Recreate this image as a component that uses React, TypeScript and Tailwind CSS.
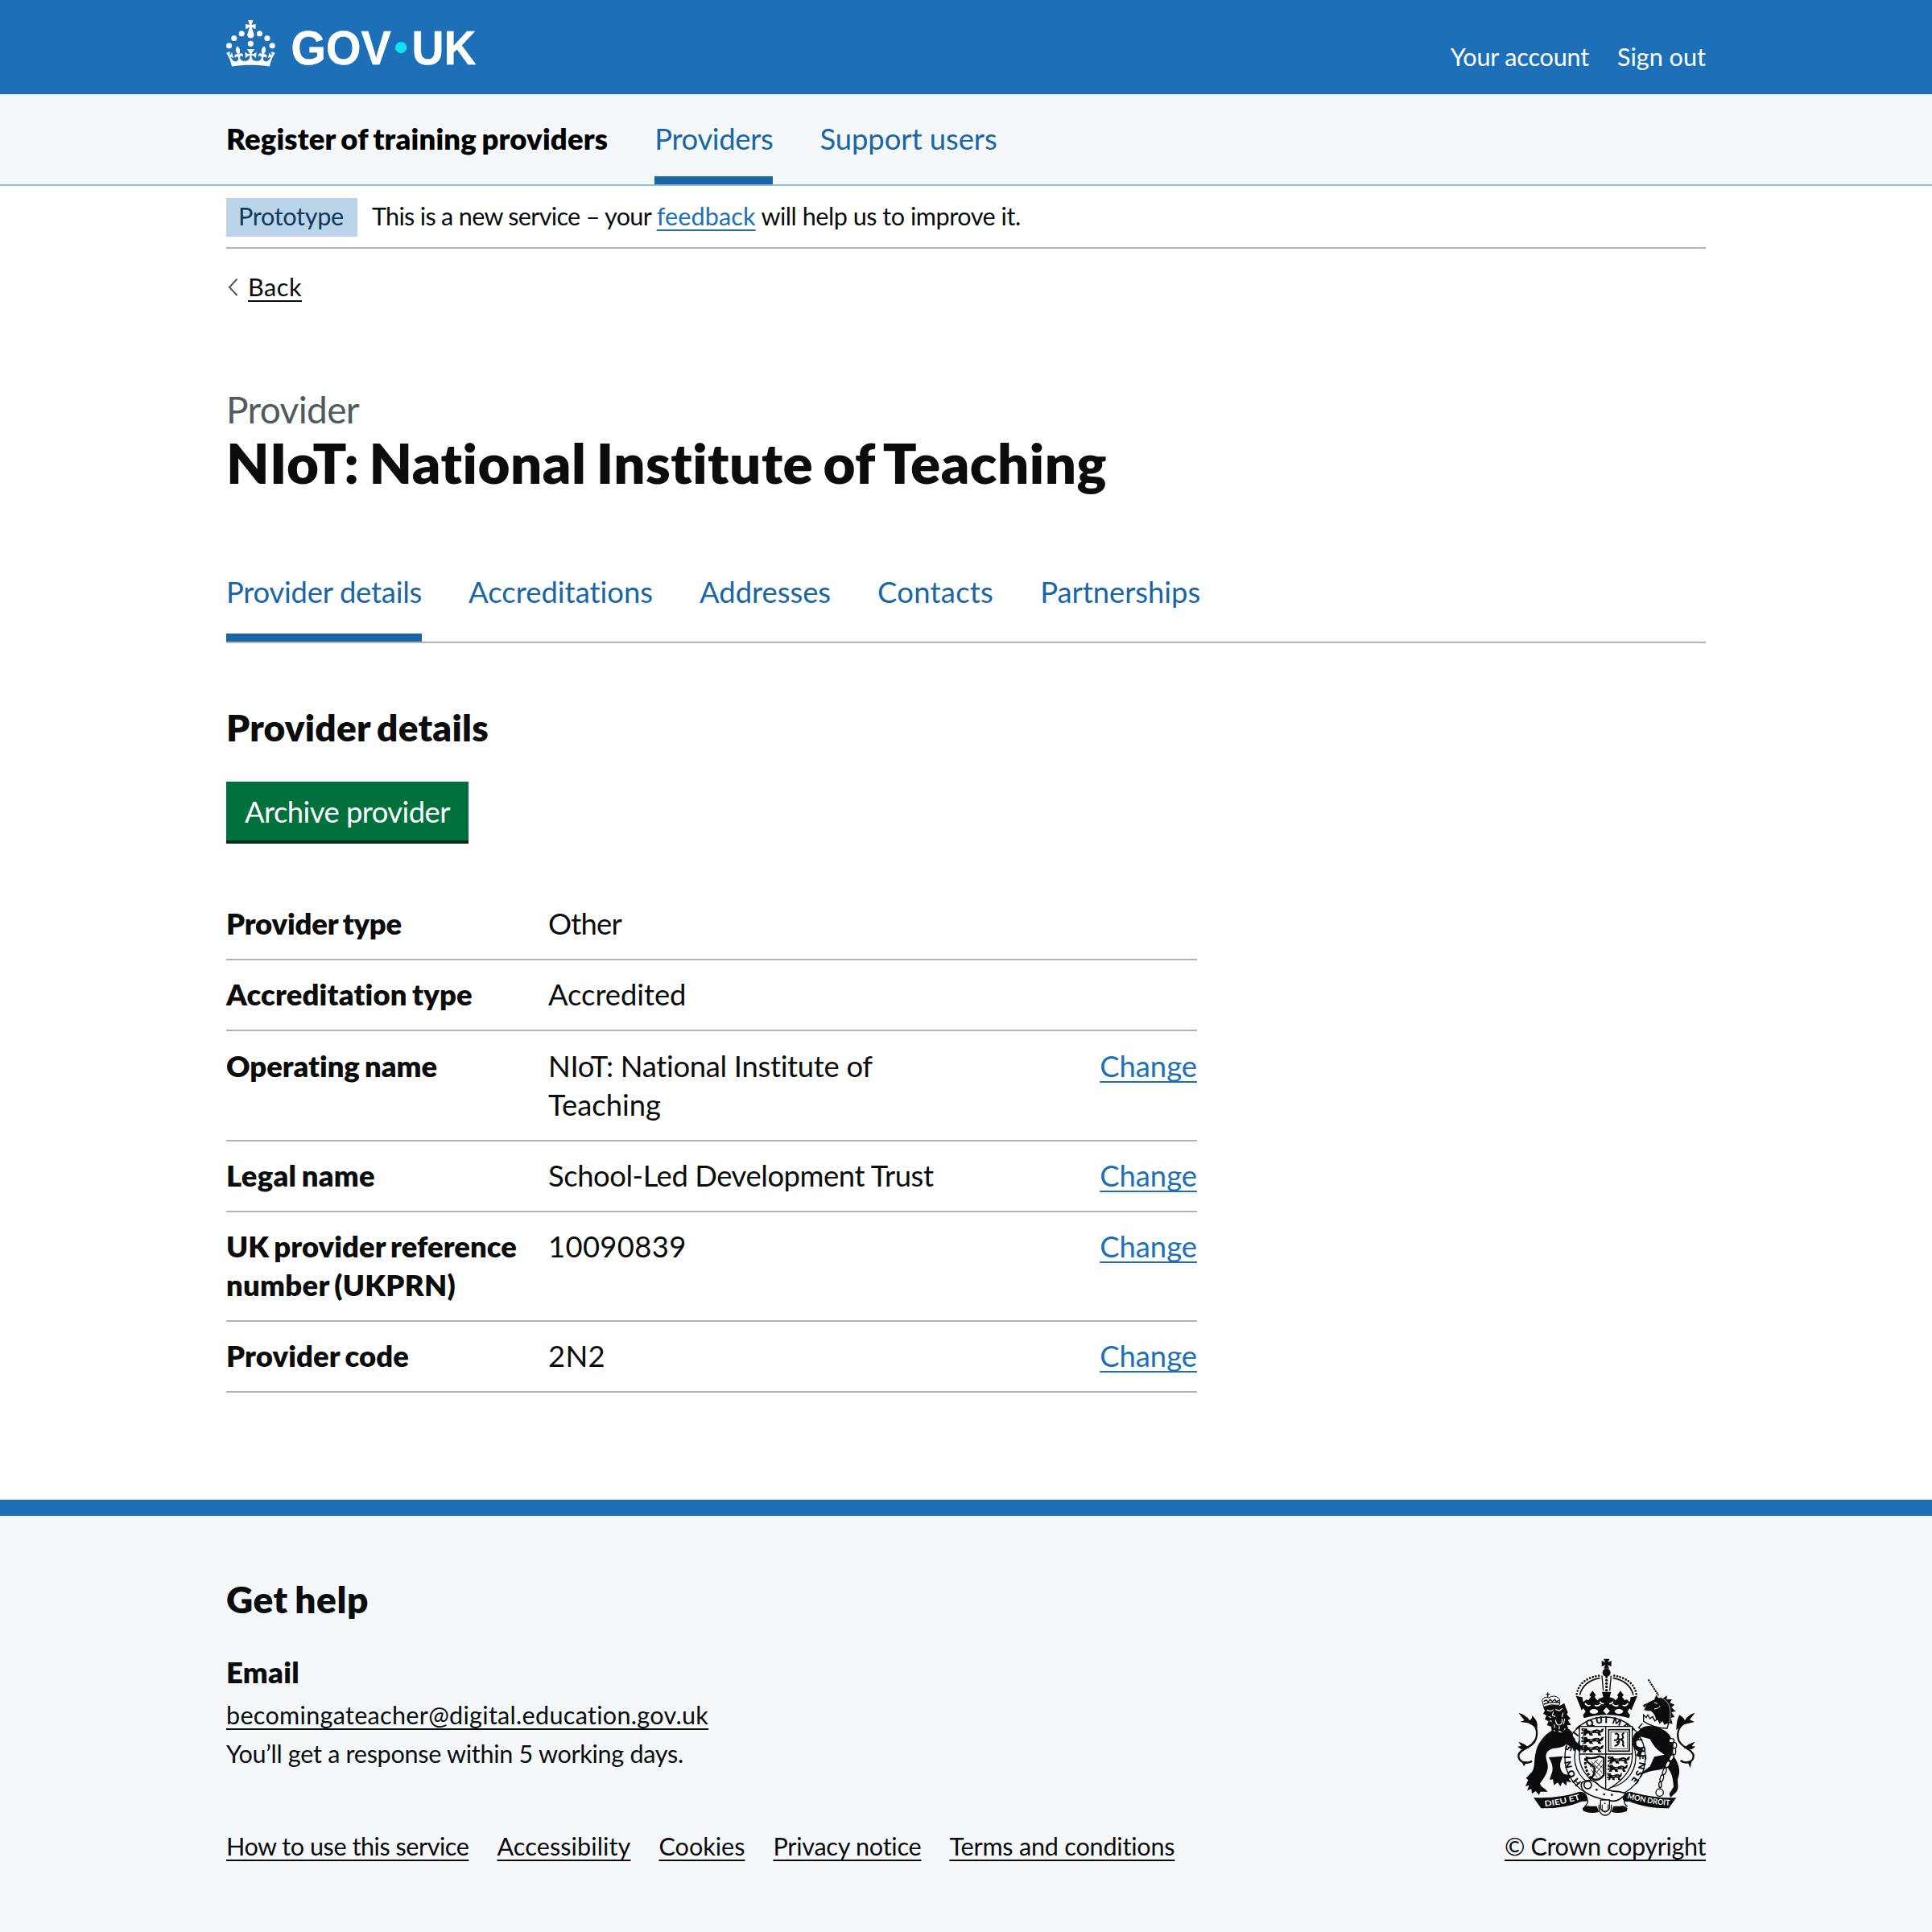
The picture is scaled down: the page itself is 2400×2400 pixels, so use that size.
const LINK = "underline decoration-[2px] underline-offset-[5px] [text-decoration-skip-ink:none]";
const BOLD = "font-extrabold [word-spacing:-0.06em]";

function Logo() {
  return (
    <svg viewBox="0 0 324 60" className="block h-[57.4px] w-[310px] overflow-visible" fill="#fff" role="img" aria-label="GOV.UK">
      <circle cx="20" cy="17.6" r="3.7" />
      <circle cx="10.2" cy="23.5" r="3.7" />
      <circle cx="3.7" cy="33.2" r="3.7" />
      <circle cx="31.7" cy="30.6" r="3.7" />
      <circle cx="43.3" cy="17.6" r="3.7" />
      <circle cx="53.2" cy="23.5" r="3.7" />
      <circle cx="59.7" cy="33.2" r="3.7" />
      <path d="M33.1,9.8c.2-.1.3-.3.5-.5l4.6,2.4v-6.8l-4.6,1.5c-.1-.2-.3-.3-.5-.5l1.9-5.9h-6.7l1.9,5.9c-.2.1-.3.3-.5.5l-4.6-1.5v6.8l4.6-2.4c.1.2.3.3.5.5l-2.6,8c-.9,2.8,1.2,5.7,4.1,5.7h0c3,0,5.1-2.9,4.1-5.7l-2.6-8ZM37,37.9s-3.4,3.8-4.1,6.1c2.2,0,4.2-.5,6.4-2.8l-.7,8.5c-2-2.8-4.4-4.1-5.7-3.8.1,3.1.5,6.7,5.8,7.2,3.7.3,6.7-1.5,7-3.8.4-2.6-2-4.3-3.7-1.6-1.4-4.5,2.4-6.1,4.9-3.2-1.9-4.5-1.8-7.7,2.4-10.9,3,4,2.6,7.3-1.2,11.1,2.4-1.3,6.2,0,4,4.6-1.2-2.8-3.7-2.2-4.2.2-.3,1.7.7,3.7,3,4.2,1.9.3,4.7-.9,7-5.9-1.3,0-2.4.7-3.9,1.7l2.4-8c.6,2.3,1.4,3.7,2.2,4.5.6-1.6.5-2.8,0-5.3l5,1.8c-2.6,3.6-5.2,8.7-7.3,17.5-7.4-1.1-15.7-1.7-24.5-1.7h0c-8.8,0-17.1.6-24.5,1.7-2.1-8.9-4.7-13.9-7.3-17.5l5-1.8c-.5,2.5-.6,3.7,0,5.3.8-.8,1.6-2.3,2.2-4.5l2.4,8c-1.5-1-2.6-1.7-3.9-1.7,2.3,5,5.2,6.2,7,5.9,2.3-.4,3.3-2.4,3-4.2-.5-2.4-3-3.1-4.2-.2-2.2-4.6,1.6-6,4-4.6-3.7-3.7-4.2-7.1-1.2-11.1,4.2,3.2,4.3,6.4,2.4,10.9,2.5-2.8,6.3-1.3,4.9,3.2-1.8-2.7-4.1-1-3.7,1.6.3,2.3,3.3,4.1,7,3.8,5.4-.5,5.7-4.2,5.8-7.2-1.3-.2-3.7,1-5.7,3.8l-.7-8.5c2.2,2.3,4.2,2.7,6.4,2.8-.7-2.3-4.1-6.1-4.1-6.1h10.6,0Z" />
      <circle cx="227" cy="35.6" r="7.5" fill="#11e0f1" />
      <g fontFamily="Liberation Sans" fontWeight="700" fontSize="61">
        <text x="84.2" y="57.4" textLength="130" lengthAdjust="spacingAndGlyphs" stroke="#fff" strokeWidth="0.5">GOV</text>
        <text x="241" y="57.4" textLength="83.5" lengthAdjust="spacingAndGlyphs" stroke="#fff" strokeWidth="0.5">UK</text>
      </g>
    </svg>
  );
}

const INK = "#0b0c0c";
const PAPER = "#f4f8fb";

function PassantLion({ x, y, w }: { x: number; y: number; w: number }) {
  return (
    <g transform={`translate(${x} ${y}) scale(${w / 80} 1)`}>
      <path d="M0 2 Q4 -4 10 0 L20 0 22 6 Q34 10 46 5 Q58 0 68 8 Q72 -2 80 0 L78 6 Q78 14 66 16 L72 26 H60 L58 18 Q48 15 38 18 L42 26 H30 L26 18 18 20 16 26 H4 L10 18 0 20 V14 L12 12 2 8z" fill={INK} />
      <path d="M6 4 h4 M30 12 h10 M52 11 h8" stroke={PAPER} strokeWidth="2.5" />
    </g>
  );
}

function RoyalArms() {
  return (
    <svg viewBox="0 0 720 615" className="block h-[205px] w-[240px] translate-x-px" fill={INK}>
      <defs>
        <path id="garter" d="M274 482 A128 128 0 1 1 432 488" />
        <path id="mottoL" d="M132 567 Q205 560 272 538" />
        <path id="mottoR" d="M438 536 Q510 558 602 564" />
      </defs>

      {/* garter */}
      <circle cx="357" cy="384" r="150" fill={PAPER} stroke={INK} strokeWidth="4" />
      <circle cx="357" cy="384" r="114" fill={PAPER} stroke={INK} strokeWidth="4" />
      <text fontFamily="Lato" fontWeight="800" fontSize="35" wordSpacing="-4">
        <textPath href="#garter" startOffset="6" textLength="600">HONI SOIT QUI MAL Y PENSE</textPath>
      </text>

      {/* imperial crown */}
      <path d="M351 17 h22 l-6 13 13 -6 v22 l-13 -6 5 13 h-20 l5 -13 -13 6 v-22 l13 6z" />
      <circle cx="362" cy="68" r="15" />
      <path d="M262 152 Q275 100 338 88 M462 152 Q449 100 386 88" fill="none" stroke={INK} strokeWidth="5" />
      <path d="M251 148 Q262 88 345 78 M473 148 Q462 88 379 78" fill="none" stroke={INK} strokeWidth="8" strokeLinecap="round" strokeDasharray="0 11.5" />
      <path d="M345 80 L350 136 M379 80 L374 136" fill="none" stroke={INK} strokeWidth="4" />
      <path d="M362 84 V136" fill="none" stroke={INK} strokeWidth="10" strokeLinecap="round" strokeDasharray="0 12.5" />
      <path d="M248 155 L272 160 275 178 288 168 294 172 304 158 298 152 310 136 322 152 318 160 328 172 336 164 350 160 345 140 379 140 374 160 388 164 396 172 406 160 402 152 414 136 426 152 420 158 430 172 436 168 449 178 452 160 477 155 458 200 446 238 Q362 214 278 238 L266 200z" />
      <path d="M282 182 q6 14 20 8 M442 182 q-6 14 -20 8 M340 186 q-12 10 -22 4 M384 186 q12 10 22 4 M338 176 q4 10 14 8 M386 176 q-4 10 -14 8" stroke={PAPER} strokeWidth="5" fill="none" />
      <g fill={PAPER}>
        <ellipse cx="315" cy="213" rx="16" ry="9" />
        <path d="M362 198 l13 13 -13 13 -13 -13z" />
        <ellipse cx="408" cy="213" rx="16" ry="9" />
        <path d="M264 212 l12 -10 8 12 -9 12zM460 212 l-12 -10 -8 12 9 12z" />
      </g>

      {/* shield */}
      <path d="M261 269 H458 V385 Q455 455 360 508 Q265 455 261 385z" fill={PAPER} stroke={INK} strokeWidth="4" />
      <path d="M359 269 V505 M261 372 H458" stroke={INK} strokeWidth="4" />
      <PassantLion x={268} y={277} w={84} />
      <PassantLion x={268} y={308} w={84} />
      <PassantLion x={268} y={339} w={84} />
      <rect x="370" y="281" width="77" height="80" fill="none" stroke={INK} strokeWidth="5" />
      <rect x="378" y="289" width="61" height="64" fill="none" stroke={INK} strokeWidth="2" />
      <path d="M394 298 q8 -6 12 2 q2 8 -2 14 q8 6 14 2 q10 -4 4 -12 q-4 -8 6 -10 M404 316 q-6 6 -14 4 M408 320 q2 12 -6 18 q-6 4 -10 2 M416 318 q10 4 8 14 q-4 6 4 12 M412 326 l-14 2" fill="none" stroke={INK} strokeWidth="6" />
      <path d="M288 385 Q310 392 336 380 L352 386 V450 Q330 478 306 462 Q322 440 316 420 Q300 408 290 400z" fill="none" stroke={INK} strokeWidth="7" />
      <path d="M284 388 Q278 430 306 464" fill="none" stroke={INK} strokeWidth="9" strokeDasharray="9 5" />
      <path d="M305 400 L345 440 M298 410 L340 455 M318 396 L348 424 M305 430 L328 460 M345 396 L310 440 M348 412 L312 456 M330 392 L300 420" stroke={INK} strokeWidth="2.5" />
      <PassantLion x={366} y={381} w={84} />
      <PassantLion x={366} y={412} w={76} />
      <PassantLion x={364} y={443} w={56} />

      {/* buckle and strap */}
      <path d="M270 478 Q300 460 325 480 Q350 510 408 512 L436 518 Q405 555 372 545 Q310 535 280 512 Q262 495 270 478z" fill={PAPER} stroke={INK} strokeWidth="5" />
      <circle cx="292" cy="487" r="14" fill="none" stroke={INK} strokeWidth="5" />
      <circle cx="325" cy="505" r="4" />
      <circle cx="353" cy="522" r="4" />
      <circle cx="382" cy="524" r="4" />
      <path d="M340 543 H373 V575 Q356 600 340 575z" fill={PAPER} stroke={INK} strokeWidth="4" />
      <path d="M272 574 Q284 562 300 566 L326 566 334 588 Q300 596 276 584zM440 574 Q430 562 412 566 L388 566 380 588 Q414 596 438 584z" />
      <path d="M290 540 Q296 556 280 568 M430 540 Q424 556 440 568" fill="none" stroke={INK} strokeWidth="4" />
      <path d="M334 560 Q332 600 357 600 Q382 600 380 560" fill="none" stroke={INK} strokeWidth="4" />
      <path d="M346 560 V580 Q357 590 368 580 V560" fill="none" stroke={INK} strokeWidth="3" />
      <circle cx="356" cy="556" r="3" />

      {/* motto ribbon */}
      <path d="M90 534 Q190 538 262 512 Q285 512 290 530 Q300 552 270 548 Q210 575 118 574z" />
      <path d="M622 534 Q540 538 452 512 Q428 512 424 532 Q418 552 446 548 Q510 575 594 574z" />
      <g fill={PAPER} fontFamily="Lato" fontWeight="700" fontSize="29">
        <text><textPath href="#mottoL" textLength="136" lengthAdjust="spacingAndGlyphs">DIEU ET</textPath></text>
        <text><textPath href="#mottoR" textLength="163" lengthAdjust="spacingAndGlyphs">MON DROIT</textPath></text>
      </g>

      {/* lion supporter */}
      <path d="M128 196 L122 172 Q130 154 146 162 Q168 150 182 162 Q192 168 186 190 Q155 184 128 196z" fill={PAPER} stroke={INK} strokeWidth="3" />
      <path d="M143 142 V162 M136 149 H151 M128 176 l10 -6 6 8 8 -10 8 8 10 -8 4 8 12 -4 M128 186 Q155 176 186 180" fill="none" stroke={INK} strokeWidth="4" />
      <path d="M126 198 Q155 184 188 192 L205 182 210 198 218 216 214 224 228 240 218 246 230 264 216 264 220 284 206 276 198 292 186 284 176 294 168 282 158 288 156 270 140 264 146 250 132 242 138 228 126 222 132 210z" />
      <path d="M140 208 l14 4 10 -6 M172 206 l14 4 12 -8 M164 214 l-4 14 12 4 M172 244 q2 20 14 20 q14 -4 10 -24 M146 232 l10 4 M150 248 l8 2 M200 218 l-4 16 M206 240 l-4 20 M186 268 l0 12 M166 262 l4 12" fill="none" stroke={PAPER} strokeWidth="3.5" />
      <path d="M158 284 C128 302 102 335 98 368 C90 395 98 430 78 444 L62 462 70 468 60 492 74 488 66 508 82 502 84 520 98 510 110 524 116 512 142 512 C136 500 118 496 114 482 C128 462 146 440 143 412 C140 392 126 372 150 356 C172 346 200 352 212 334 L236 350 240 362 250 354 264 366 266 354 278 356 268 340 C250 332 240 318 232 288 L214 272 L196 292z" />
      <path d="M146 384 L200 380 C186 404 184 428 204 446 L232 452 222 466 232 478 214 474 212 490 198 476 190 492 180 478 166 488 162 466 150 468 156 448 C166 430 160 404 146 384z" />
      <path d="M84 398 C60 412 34 400 34 378 C36 350 90 350 100 312 C108 280 96 254 60 248" fill="none" stroke={INK} strokeWidth="7" />
      <path d="M34 218 Q62 226 76 246 Q86 240 84 228 Q108 246 104 276 L70 256 40 252 56 246zM34 326 Q60 334 74 350 L44 354 30 344 44 342zM92 320 Q82 330 76 346 L96 330zM46 400 L54 418 66 400z" />

      {/* unicorn supporter */}
      <path d="M518 94 L556 154" stroke={INK} strokeWidth="6" strokeDasharray="7 2.5" />
      <path d="M572 164 l16 -10 -2 14 20 0 -8 12 18 8 -12 10 16 14 -16 4 12 18 -14 2 6 24 -16 -6z" />
      <path d="M496 192 Q500 184 512 182 Q530 172 540 168 L546 150 L556 162 Q566 158 574 166 Q598 182 600 212 Q602 242 594 264 Q570 262 546 242 Q540 220 528 212 Q512 214 500 207 L506 200z" stroke={PAPER} strokeWidth="2" />
      <path d="M540 180 l12 4 M506 192 l4 2 M540 204 Q556 204 562 192" fill="none" stroke={PAPER} strokeWidth="3" />
      <path d="M500 226 L510 236 516 226 524 240 534 232 542 248 554 240 560 256 572 246 578 260 594 254 L588 276 Q540 276 500 250z" fill={PAPER} stroke={INK} strokeWidth="4" />
      <path d="M482 286 Q500 262 530 268 Q580 276 596 300 Q616 330 606 368 C620 392 642 420 630 456 C622 480 636 492 622 514 L600 534 596 520 612 494 C610 462 606 444 588 420 C560 436 536 430 512 440 L488 450 500 436 L524 418 540 382 L578 374 C548 356 536 340 524 316 L486 306 Q466 322 476 342 L498 352 488 384 472 378 480 362 Q456 352 460 312 Q466 290 482 286z" />
      <path d="M496 258 l-14 14 10 10 M486 294 Q512 288 522 300" fill="none" stroke={INK} strokeWidth="4" />
      <path d="M638 396 C660 412 688 400 686 376 C680 350 640 350 630 318 C622 286 636 262 664 250" fill="none" stroke={INK} strokeWidth="7" />
      <path d="M692 218 Q664 226 654 246 L648 236 634 226 Q622 246 622 282 L650 262 690 252 672 244zM692 326 Q664 334 650 350 L680 354 694 344 680 342zM664 400 L674 424 680 396z" />
      <g fill={PAPER} stroke={INK} strokeWidth="4">
        <ellipse cx="604" cy="322" rx="10" ry="8" />
        <ellipse cx="616" cy="340" rx="7" ry="11" />
        <ellipse cx="614" cy="362" rx="6" ry="12" />
        <ellipse cx="604" cy="386" rx="7" ry="12" transform="rotate(25 604 386)" />
        <ellipse cx="590" cy="410" rx="7" ry="13" transform="rotate(25 590 410)" />
        <ellipse cx="578" cy="436" rx="6" ry="13" transform="rotate(20 578 436)" />
        <ellipse cx="568" cy="462" rx="6" ry="13" transform="rotate(15 568 462)" />
        <ellipse cx="562" cy="486" rx="5" ry="11" />
        <circle cx="560" cy="515" r="14" />
      </g>
    </svg>
  );
}

type Line = [text: string, tracking: string];

const ROWS: { key: Line[]; value: Line[]; change: boolean }[] = [
  { key: [["Provider type", "tracking-[-0.17px]"]], value: [["Other", "tracking-[-0.8px]"]], change: false },
  { key: [["Accreditation type", "tracking-[0.18px]"]], value: [["Accredited", "tracking-[-0.05px]"]], change: false },
  { key: [["Operating name", "tracking-[-0.03px]"]], value: [["NIoT: National Institute of", "tracking-[-0.3px]"], ["Teaching", "tracking-normal"]], change: true },
  { key: [["Legal name", "tracking-[0.27px]"]], value: [["School-Led Development Trust", "tracking-[-0.43px]"]], change: true },
  { key: [["UK provider reference", "tracking-[0.06px]"], ["number (UKPRN)", "tracking-[0.28px]"]], value: [["10090839", "tracking-[0.35px]"]], change: true },
  { key: [["Provider code", "tracking-[0.14px]"]], value: [["2N2", "tracking-[0.33px]"]], change: true },
];

const TABS: Line[] = [
  ["Provider details", "tracking-[-0.23px]"],
  ["Accreditations", "tracking-[0.02px]"],
  ["Addresses", "tracking-[-0.02px]"],
  ["Contacts", "tracking-[0.26px]"],
  ["Partnerships", "tracking-[-0.02px]"],
];

const FOOTER_LINKS: Line[] = [
  ["How to use this service", "tracking-[-0.47px]"],
  ["Accessibility", "tracking-[0.1px]"],
  ["Cookies", "tracking-[-0.02px]"],
  ["Privacy notice", "tracking-[-0.26px]"],
  ["Terms and conditions", "tracking-[-0.22px]"],
];

export default function App() {
  return (
    <div className="flex h-[2400px] w-[2400px] flex-col bg-white font-['Lato',sans-serif] text-[#0b0c0c] [font-variant-ligatures:none]">
      <header className="flex h-[117px] justify-between bg-[#1d70b8] px-[281px]">
        <div className="pt-[25px]">
          <Logo />
        </div>
        <nav className="flex gap-[35px] pt-[52px] text-[30.6px] leading-[38px] text-white">
          <a className="tracking-[-0.2px]">Your account</a>
          <a>Sign out</a>
        </nav>
      </header>

      <div className="flex h-[114px] gap-[58px] border-b-2 border-[#8eb8dc] bg-[#f4f8fb] px-[281px] text-[36.4px] leading-[48px]">
        <div className={`pt-[31px] tracking-[0.21px] text-black ${BOLD}`}>Register of training providers</div>
        <a className="border-b-[10px] border-[#1a65a6] pt-[31px] tracking-[-0.33px] text-[#1a65a6]">Providers</a>
        <a className="pt-[31px] tracking-[-0.05px] text-[#1a65a6]">Support users</a>
      </div>

      <main className="flex h-[1632px] flex-col px-[281px]">
        <div className="flex h-[78px] items-start gap-[18px] border-b-2 border-[#b1b4b6] pt-[15px] text-[30.6px] leading-[46px]">
          <strong className="h-[48px] w-[163px] bg-[#bbd4ea] pl-[15px] font-normal tracking-[-0.3px] text-[#0f385c]">Prototype</strong>
          <p className="whitespace-pre">
            <span className="tracking-[-0.7px]">This is a new service – your </span>
            <a className={`tracking-[0.11px] text-[#1d70b8] ${LINK}`}>feedback</a>
            <span className="tracking-[-0.48px]"> will help us to improve it.</span>
          </p>
        </div>

        <div className="flex h-[48px] pt-[29px] text-[30.6px] leading-[38px]">
          <svg viewBox="0 0 27 38" className="h-[38px] w-[27px]" fill="none" stroke="#505a5f" strokeWidth="2">
            <path d="M13.5 8.5 L4 18.7 L13.5 29" />
          </svg>
          <a className={`h-[38px] tracking-[0.53px] ${LINK}`}>Back</a>
        </div>

        <p className="mt-[123px] text-[46px] leading-[57px] tracking-[-0.63px] text-[#505a5f]">Provider</p>
        <h1 className={`text-[69px] leading-[76px] tracking-[0.49px] ${BOLD}`}>NIoT: National Institute of Teaching</h1>

        <nav className="mt-[98px] flex h-[88px] gap-[58px] border-b-2 border-[#b1b4b6] text-[36.4px] leading-[48px] text-[#1a65a6]">
          {TABS.map(([label, tracking], i) => (
            <a key={label} className={`${tracking} ${i === 0 ? "border-b-[10px] border-[#1a65a6]" : ""}`}>
              {label}
            </a>
          ))}
        </nav>

        <h2 className={`mt-[76px] text-[46px] leading-[57px] tracking-[0.25px] ${BOLD}`}>Provider details</h2>
        <button className="mt-[39px] h-[77px] w-[301px] border-b-4 border-[#002d18] bg-[#00703c] text-[36.4px] leading-[48px] tracking-[-0.54px] text-white">
          Archive provider
        </button>

        <dl className="mt-[57px] w-[1206px] text-[36.4px] leading-[48px]">
          {ROWS.map((row) => (
            <div key={row.key[0][0]} className="flex border-b-2 border-[#b1b4b6] pt-[18.2px] pb-[20px]">
              <dt className={`w-[400px] ${BOLD}`}>
                {row.key.map(([text, tracking]) => (
                  <span key={text} className={`block ${tracking}`}>{text}</span>
                ))}
              </dt>
              <dd className="flex-1">
                {row.value.map(([text, tracking]) => (
                  <span key={text} className={`block ${tracking}`}>{text}</span>
                ))}
              </dd>
              {row.change && (
                <dd>
                  <a className={`text-[#1d70b8] ${LINK}`}>Change</a>
                </dd>
              )}
            </div>
          ))}
        </dl>
      </main>

      <footer className="flex flex-1 justify-between border-t-[20px] border-[#1d70b8] bg-[#f4f8fb] px-[281px]">
        <div className="pt-[75px]">
          <h2 className={`text-[46px] leading-[57px] tracking-[0.58px] ${BOLD}`}>Get help</h2>
          <h3 className={`mt-[38px] text-[36.4px] leading-[48px] tracking-[0.29px] ${BOLD}`}>Email</h3>
          <div className="mt-[6px] text-[30.6px] leading-[48px]">
            <p>
              <a className={`tracking-[0.28px] ${LINK}`}>becomingateacher@digital.education.gov.uk</a>
            </p>
            <p className="tracking-[-0.3px]">You’ll get a response within 5 working days.</p>
          </div>
          <div className="mt-[67px] flex gap-[35px] text-[30.6px] leading-[48px]">
            {FOOTER_LINKS.map(([label, tracking]) => (
              <a key={label} className={`${tracking} ${LINK}`}>
                {label}
              </a>
            ))}
          </div>
        </div>
        <div className="flex flex-col items-center pt-[172px]">
          <RoyalArms />
          <a className={`mt-[10px] text-[30.6px] leading-[48px] tracking-[-0.39px] ${LINK}`}>© Crown copyright</a>
        </div>
      </footer>
    </div>
  );
}
